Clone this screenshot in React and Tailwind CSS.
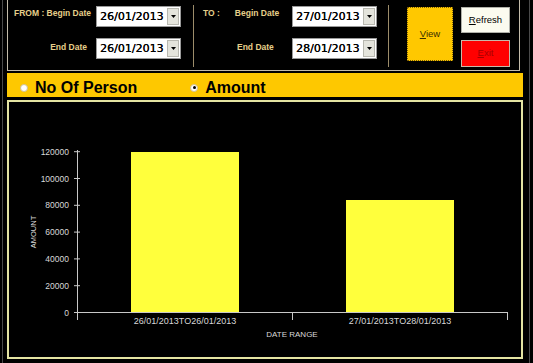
import React from "react";

const Combo = ({ value }) => (
  <div className="w-[85px] h-[21px] bg-white border border-[#9a9a9a] flex items-center justify-between">
    <span className="pl-[3px] text-[11px] leading-none text-black [text-shadow:0.3px_0_0_#000]" style={{ fontFamily: '"DejaVu Sans", sans-serif' }}>
      {value}
    </span>
    <div className="w-[12px] h-[17px] mr-[1px] bg-[#e4e4dc] border border-[#b8b8b0] flex items-center justify-center">
      <svg width="5" height="3" viewBox="0 0 5 3">
        <path d="M0 0 L5 0 L2.5 3 Z" fill="#000" />
      </svg>
    </div>
  </div>
);

const Label = ({ children, className = "" }) => (
  <span className={"text-[8.5px] leading-[10px] font-bold text-[#e6cf8a] whitespace-nowrap " + className}>{children}</span>
);

const ticks = [0, 20000, 40000, 60000, 80000, 100000, 120000];

export default function App() {
  return (
    <div
      className="w-[533px] h-[363px] bg-black pl-[2px] pr-[3px] overflow-hidden"
      style={{ fontFamily: '"Liberation Sans", Arial, sans-serif' }}
    >
      <div className="h-full border-x border-[#4a4a4a] pl-[4px] pr-[6px] flex flex-col">
        {/* Top panel */}
        <div className="w-[513px] h-[71px] border-l border-r border-b border-[#c4bcaa] flex">
          {/* Section 1 */}
          <div className="w-[185px] flex flex-col pt-[6px] gap-[11px]">
            <div className="flex h-[21px] items-start">
              <div className="w-[84px] flex justify-end pr-[1px] pt-[2px]">
                <Label>FROM : Begin Date</Label>
              </div>
              <div className="ml-[4px]">
                <Combo value="26/01/2013" />
              </div>
            </div>
            <div className="flex h-[21px] items-start">
              <div className="w-[84px] flex justify-end pr-[5px] pt-[4px]">
                <Label>End Date</Label>
              </div>
              <div className="ml-[4px]">
                <Combo value="26/01/2013" />
              </div>
            </div>
          </div>
          <div className="w-px bg-[#9c8c6a] mt-[5px] mb-[3px]" />
          {/* Section 2 */}
          <div className="w-[194px] flex flex-col pt-[6px] gap-[11px]">
            <div className="flex h-[21px] items-start">
              <div className="w-[98px] flex pt-[2px]">
                <Label className="ml-[9px]">TO :</Label>
                <Label className="ml-[15px]">Begin Date</Label>
              </div>
              <Combo value="27/01/2013" />
            </div>
            <div className="flex h-[21px] items-start">
              <div className="w-[98px] flex pt-[4px]">
                <Label className="ml-[43px]">End Date</Label>
              </div>
              <Combo value="28/01/2013" />
            </div>
          </div>
          <div className="w-px bg-[#9c8c6a] mt-[5px] mb-[3px]" />
          {/* Section 3 */}
          <div className="flex-1 flex pl-[18px] pt-[7px] gap-[8px]">
            <div className="w-[46px] h-[54px] bg-[#ffc800] border border-dotted border-[#7a5c00] flex items-center justify-center">
              <span className="text-[9.5px] text-[#3a2c00]">
                <span className="underline">V</span>iew
              </span>
            </div>
            <div className="flex flex-col gap-[7px]">
              <div className="w-[49px] h-[26px] bg-[#fbfbef] border border-[#b0b0a8] flex items-center justify-center">
                <span className="text-[9.5px] text-black">
                  <span className="underline">R</span>efresh
                </span>
              </div>
              <div className="w-[49px] h-[27px] bg-[#ff0000] border border-[#c8b8a8] flex items-center justify-center">
                <span className="text-[9.5px] text-[#a80000]">
                  <span className="underline">E</span>xit
                </span>
              </div>
            </div>
          </div>
        </div>

        {/* Radio band */}
        <div className="mt-[2px] h-[24px] w-[516px] bg-[#fec800] flex items-center pt-[5px]">
          <div className="ml-[13px] w-[8px] h-[8px] rounded-full bg-white border border-[#d0c090]" />
          <span className="ml-[7px] text-[16px] font-bold text-black leading-none">No Of Person</span>
          <div className="ml-[53px] w-[8px] h-[8px] rounded-full bg-white border border-[#d0c090] flex items-center justify-center">
            <div className="w-[3px] h-[3px] rounded-full bg-black" />
          </div>
          <span className="ml-[7px] text-[16px] font-bold text-black leading-none">Amount</span>
        </div>

        {/* Chart panel */}
        <div className="mt-[3px] w-[516px] h-[259px] border-2 border-[#e4e4a2] bg-black">
          <svg width="512" height="255" viewBox="0 0 512 255">
            <rect x="122" y="50" width="108" height="160" fill="#ffff3c" />
            <rect x="337" y="98" width="108" height="112" fill="#ffff3c" />
            <line x1="68.5" y1="48" x2="68.5" y2="218" stroke="#c8c8c8" strokeWidth="1" />
            <line x1="68" y1="210.5" x2="498" y2="210.5" stroke="#c8c8c8" strokeWidth="1" />
            <line x1="283.5" y1="210" x2="283.5" y2="218" stroke="#c8c8c8" strokeWidth="1" />
            <line x1="498.5" y1="210" x2="498.5" y2="218" stroke="#c8c8c8" strokeWidth="1" />
            {ticks.map((t, i) => {
              const y = 210.5 - i * 26.8;
              return (
                <g key={t}>
                  <line x1="65" y1={y} x2="71" y2={y} stroke="#c8c8c8" strokeWidth="1" />
                  <text x="60" y={y + 3} textAnchor="end" fontSize="8.5" fill="#d8d8d8" fontFamily='"Liberation Sans", Arial, sans-serif'>
                    {t}
                  </text>
                </g>
              );
            })}
            <text x="176" y="222" textAnchor="middle" fontSize="9" fill="#d8d8d8" fontFamily='"Liberation Sans", Arial, sans-serif'>
              26/01/2013TO26/01/2013
            </text>
            <text x="391" y="222" textAnchor="middle" fontSize="9" fill="#d8d8d8" fontFamily='"Liberation Sans", Arial, sans-serif'>
              27/01/2013TO28/01/2013
            </text>
            <text x="283" y="235" textAnchor="middle" fontSize="8" fill="#d8d8d8" fontFamily='"Liberation Sans", Arial, sans-serif'>
              DATE RANGE
            </text>
            <text
              x="0"
              y="0"
              textAnchor="middle"
              fontSize="7.5"
              fill="#d8d8d8"
              fontFamily='"Liberation Sans", Arial, sans-serif'
              transform="translate(27 130) rotate(-90)"
            >
              AMOUNT
            </text>
          </svg>
        </div>
      </div>
    </div>
  );
}
